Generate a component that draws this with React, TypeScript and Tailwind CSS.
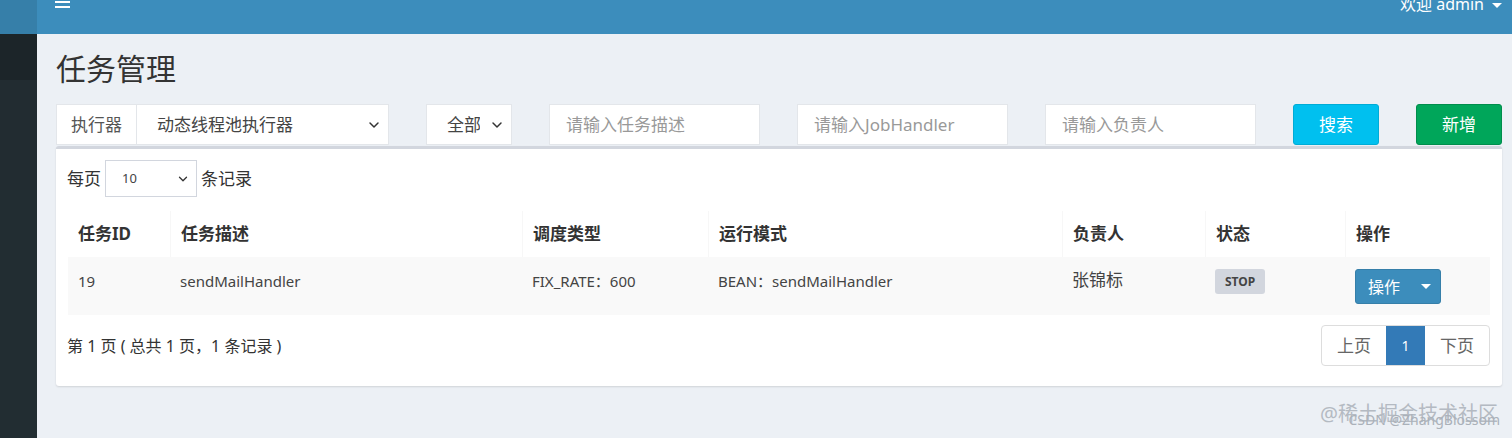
import { ChevronDown } from 'lucide-react'

const font = { fontFamily: '"Noto Sans", "Noto Sans CJK SC", sans-serif' }

const columns = [
  { label: '任务ID', width: 'w-[102px]' },
  { label: '任务描述', width: 'w-[352px]' },
  { label: '调度类型', width: 'w-[186px]' },
  { label: '运行模式', width: 'w-[354px]' },
  { label: '负责人', width: 'w-[143px]' },
  { label: '状态', width: 'w-[140px]' },
  { label: '操作', width: 'flex-1' },
]

function Caret({ className = '' }: { className?: string }) {
  return <span className={`inline-block h-0 w-0 border-x-[5px] border-t-[5px] border-x-transparent border-t-white ${className}`} />
}

function TextInput({ placeholder }: { placeholder: string }) {
  return (
    <div className="flex h-[41px] w-[211px] items-center border border-[#e3e6ea] bg-white pl-[16px] text-[17px] text-[#999]">
      {placeholder}
    </div>
  )
}

export default function App() {
  return (
    <div style={font} className="relative flex h-[438px] w-[1512px] overflow-hidden bg-[#ecf0f5]">
      <aside className="flex w-[37px] shrink-0 flex-col bg-[#222d32]">
        <div className="h-[34px] bg-[#367fa9]" />
        <div className="h-[46px] bg-[#1c2529]" />
        <div className="h-[110px] bg-[#222c31]" />
      </aside>

      <div className="flex flex-1 flex-col">
        <header className="flex h-[34px] items-start justify-between bg-[#3c8dbc] pl-[18px] pr-[10px]">
          <svg width="15" height="10" viewBox="0 0 15 10">
            <rect x="0" y="1" width="15" height="2" fill="white" />
            <rect x="0" y="6" width="15" height="2" fill="white" />
          </svg>
          <div className="-mt-[8px] flex items-center gap-[8px] text-[16px] text-white">
            <span>欢迎 admin</span>
            <Caret className="mt-[2px]" />
          </div>
        </header>

        <main className="flex flex-col pl-[19px] pr-[10px]">
          <h1 className="mt-[15px] h-[55px] text-[30px] leading-[40px] text-[#333]">任务管理</h1>

          <div className="flex h-[41px] items-center gap-[37px]">
            <div className="flex h-[41px] w-[333px]">
              <div className="flex w-[81px] items-center justify-center border border-[#e3e6ea] bg-white text-[17px] text-[#555]">执行器</div>
              <div className="flex flex-1 items-center justify-between border border-l-0 border-[#e3e6ea] bg-white pl-[20px] pr-[6px] text-[17px] text-[#444]">
                <span>动态线程池执行器</span>
                <ChevronDown className="h-4 w-4 text-[#333]" strokeWidth={2.2} />
              </div>
            </div>
            <div className="flex h-[41px] w-[86px] items-center justify-between border border-[#e3e6ea] bg-white pl-[20px] pr-[6px] text-[17px] text-[#444]">
              <span className="w-[33px] overflow-hidden whitespace-nowrap">全部</span>
              <ChevronDown className="h-4 w-4 text-[#333]" strokeWidth={2.2} />
            </div>
            <TextInput placeholder="请输入任务描述" />
            <TextInput placeholder="请输入JobHandler" />
            <TextInput placeholder="请输入负责人" />
            <button className="h-[41px] w-[86px] rounded-[3px] border border-[#00acd6] bg-[#00c0ef] text-[17px] text-white">搜索</button>
            <button className="h-[41px] w-[86px] rounded-[3px] border border-[#008d4c] bg-[#00a65a] text-[17px] text-white">新增</button>
          </div>

          <section className="mt-[1px] flex flex-col rounded-[3px] border-t-[3px] border-[#d2d6de] bg-white pb-[20px] pl-[11px] pr-[12px] shadow-[0_1px_2px_rgba(0,0,0,0.12)]">
            <div className="mt-[11px] flex items-center text-[17px] text-[#333]">
              <span>每页</span>
              <div className="mx-[4px] flex h-[37px] w-[92px] items-center justify-between border border-[#d2d6de] pl-[16px] pr-[6px] text-[13px] text-[#444]">
                <span>10</span>
                <ChevronDown className="h-[14px] w-[14px] text-[#333]" strokeWidth={2.2} />
              </div>
              <span>条记录</span>
            </div>

            <div className="mt-[14px] flex flex-col pl-[1px]">
              <div className="flex h-[46px] items-center text-[17px] font-bold text-[#333]">
                {columns.map((c) => (
                  <div key={c.label} className={`${c.width} flex h-full items-center border-l border-[#f7f7f7] pl-[10px] first:border-l-0`}>
                    {c.label}
                  </div>
                ))}
              </div>
              <div className="flex h-[58px] items-start bg-[#f9f9f9] text-[15px] leading-[20px] text-[#444]">
                <div className="w-[102px] pl-[10px] pt-[14px]">19</div>
                <div className="w-[352px] pl-[10px] pt-[14px]">sendMailHandler</div>
                <div className="w-[186px] pl-[10px] pt-[14px]">FIX_RATE：600</div>
                <div className="w-[354px] pl-[10px] pt-[14px]">BEAN：sendMailHandler</div>
                <div className="w-[143px] pl-[10px] pt-[13px] text-[17px]">张锦标</div>
                <div className="w-[140px] pl-[10px] pt-[12px]">
                  <span className="inline-flex h-[25px] w-[50px] items-center justify-center rounded-[3px] bg-[#d2d6de] text-[12px] font-bold text-[#444]">STOP</span>
                </div>
                <div className="flex-1 pl-[10px] pt-[12px]">
                  <div className="inline-flex h-[35px] w-[86px] items-stretch overflow-hidden rounded-[3px] border border-[#367fa9] bg-[#3c8dbc] text-[16px] text-white">
                    <span className="flex w-[56px] items-center justify-center">操作</span>
                    <span className="flex flex-1 items-center justify-center">
                      <Caret />
                    </span>
                  </div>
                </div>
              </div>
            </div>

            <div className="mt-[10px] flex items-center justify-between">
              <span className="text-[16px] text-[#333]">第 1 页 ( 总共 1 页，1 条记录 )</span>
              <div className="flex h-[41px] overflow-hidden rounded-[4px] border border-[#ddd] text-[17px]">
                <span className="flex w-[64px] items-center justify-center text-[#666]">上页</span>
                <span className="flex w-[39px] items-center justify-center bg-[#337ab7] text-[14px] text-white">1</span>
                <span className="flex w-[64px] items-center justify-center text-[#666]">下页</span>
              </div>
            </div>
          </section>
        </main>
      </div>

      <div className="pointer-events-none absolute right-[14px] top-[402px] text-[20px] leading-[24px] text-[#b4bac2]">@稀土掘金技术社区</div>
      <div className="pointer-events-none absolute right-[12px] top-[412px] text-[14px] leading-[16px] text-[#aab1b9]">CSDN @ZhangBlossom</div>
    </div>
  )
}
